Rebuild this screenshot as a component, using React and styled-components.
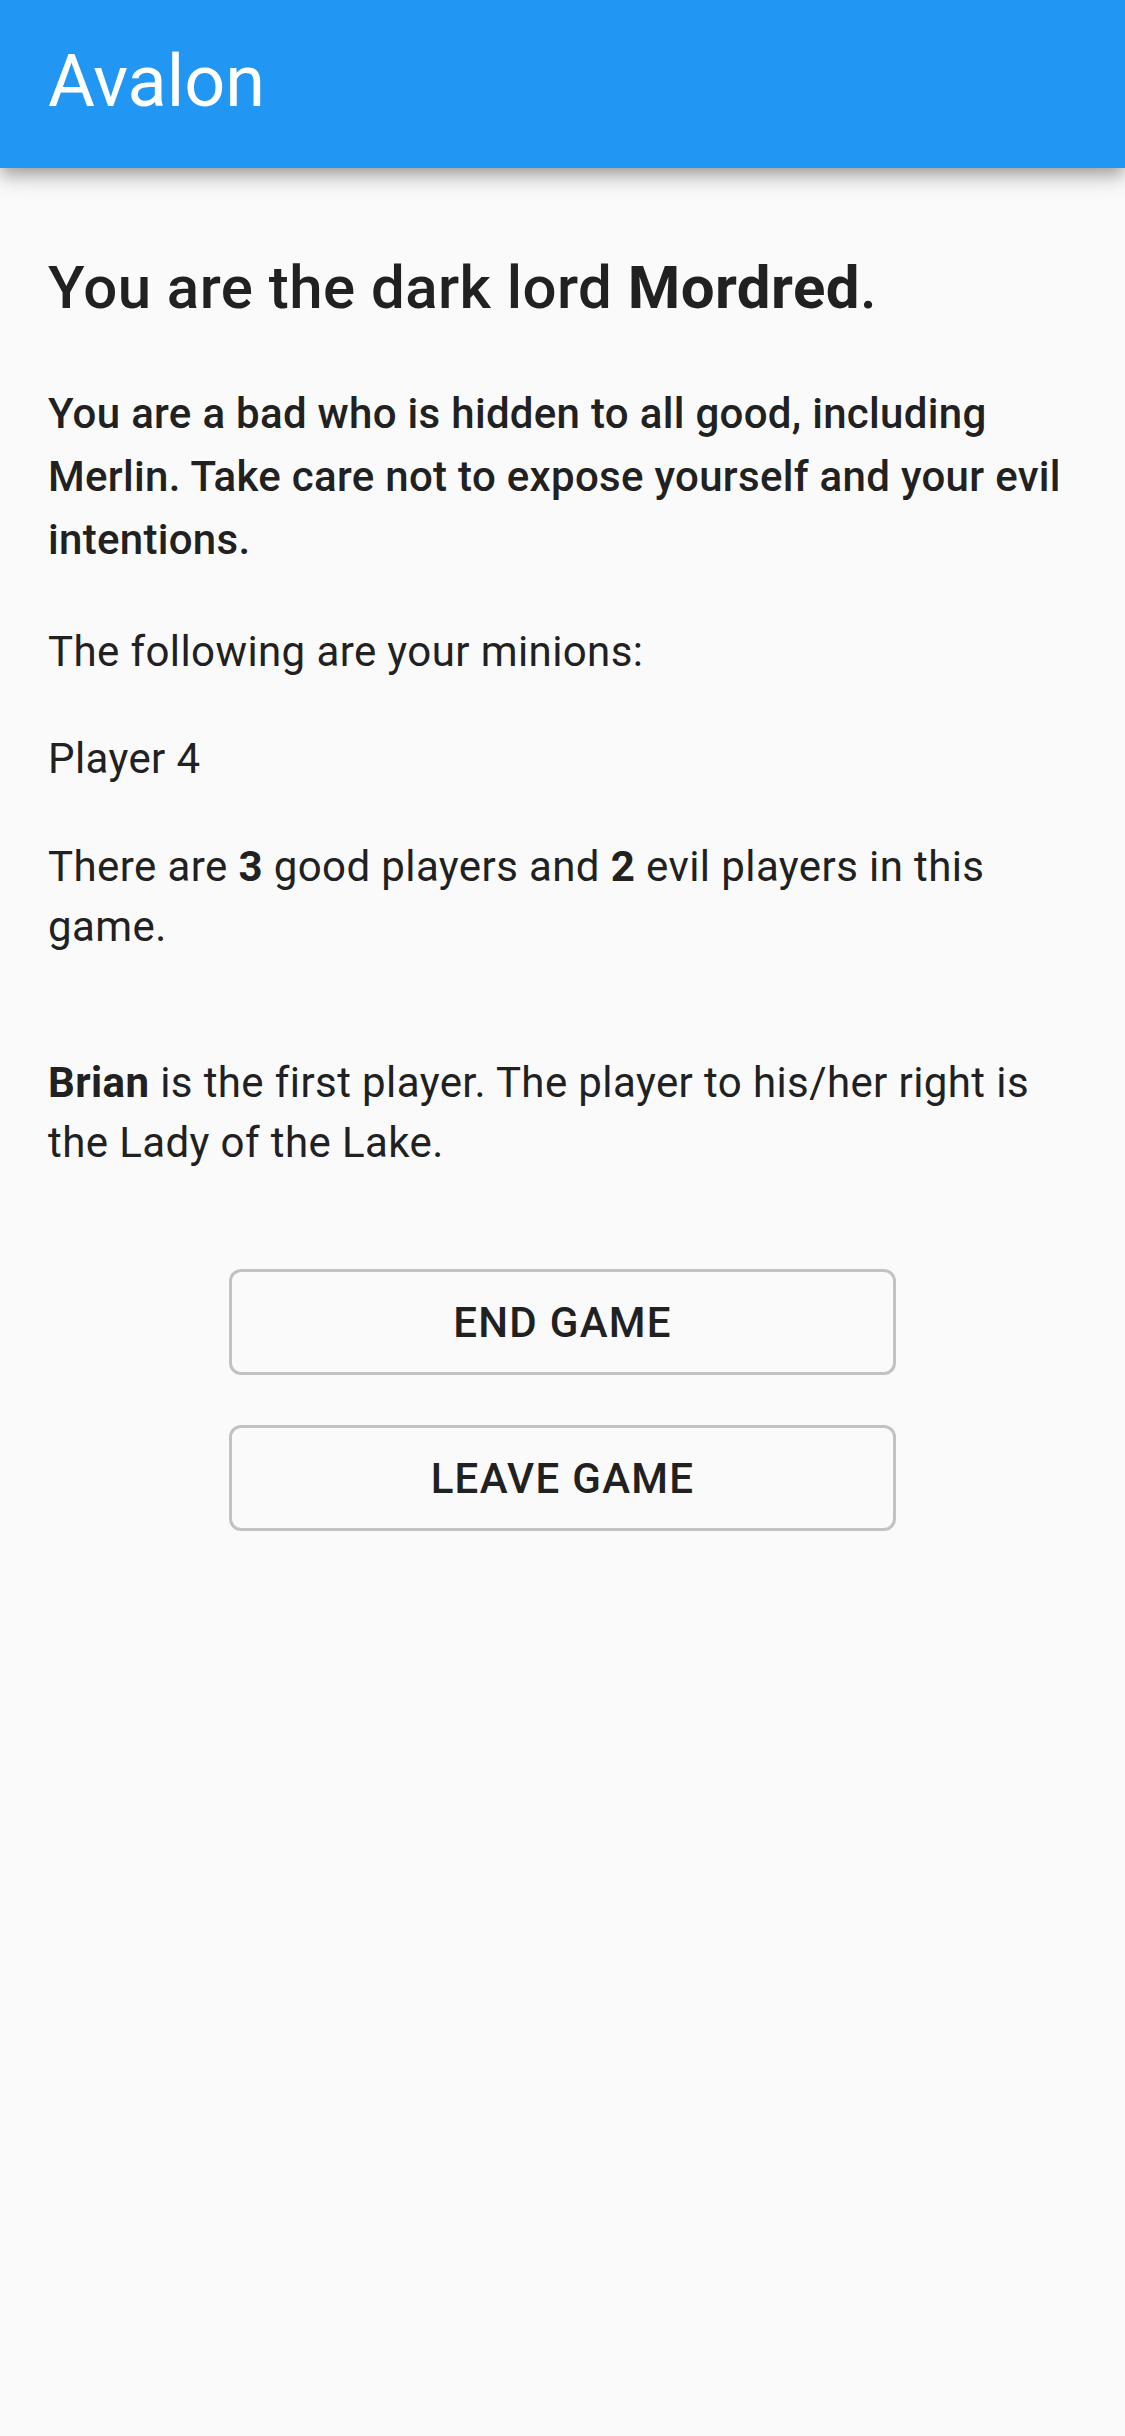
import styled, { createGlobalStyle } from "styled-components";

const GlobalStyle = createGlobalStyle`
  html, body {
    margin: 0;
    padding: 0;
    background: #fafafa;
  }
  body {
    font-family: Roboto, "Noto Sans", sans-serif;
    color: #212121;
  }
`;

const Page = styled.div`
  min-height: 2436px;
  background: #fafafa;
  display: flex;
  flex-direction: column;
`;

const AppBar = styled.header`
  height: 168px;
  background: #2196f3;
  display: flex;
  align-items: center;
  padding: 0 48px;
  box-shadow: 0 6px 12px -3px rgba(0, 0, 0, 0.2),
    0 12px 15px 0 rgba(0, 0, 0, 0.14), 0 3px 30px 0 rgba(0, 0, 0, 0.12);
  position: relative;
  z-index: 1;
`;

const AppTitle = styled.h1`
  margin: 0;
  font-size: 72px;
  font-weight: 400;
  color: #fff;
  line-height: 1;
  padding-bottom: 4px;
`;

const Content = styled.main`
  padding: 82px 48px 0;
  display: flex;
  flex-direction: column;
`;

const Heading = styled.h2`
  margin: 0 0 57px;
  font-size: 60px;
  line-height: 75px;
  letter-spacing: 0.45px;
  font-weight: 500;
`;

const Strong = styled.b`
  font-weight: 700;
`;

const Lead = styled.p`
  margin: 0 0 51px;
  font-size: 42px;
  line-height: 63px;
  letter-spacing: 0.3px;
  font-weight: 500;
`;

const Text = styled.p`
  margin: 0 0 ${({ $gap }) => $gap ?? 48}px;
  font-size: 42px;
  line-height: 60px;
  letter-spacing: 0.4px;
  font-weight: 400;
`;

const Actions = styled.div`
  display: flex;
  flex-direction: column;
  align-items: center;
  gap: 50px;
`;

const OutlineButton = styled.button`
  width: 667px;
  height: 106px;
  border: 3px solid #c2c2c2;
  border-radius: 12px;
  background: transparent;
  color: #212121;
  font-family: Roboto, sans-serif;
  font-size: 42px;
  font-weight: 500;
  letter-spacing: 1.3px;
  text-transform: uppercase;
  cursor: pointer;
`;

export default function App() {
  return (
    <>
      <GlobalStyle />
      <Page>
        <AppBar>
          <AppTitle>Avalon</AppTitle>
        </AppBar>
        <Content>
          <Heading>
            You are the dark lord <Strong>Mordred</Strong>.
          </Heading>
          <Lead>
            You are a bad who is hidden to all good, including Merlin. Take
            care not to expose yourself and your evil intentions.
          </Lead>
          <Text $gap={47}>The following are your minions:</Text>
          <Text>Player 4</Text>
          <Text $gap={96}>
            There are <Strong>3</Strong> good players and <Strong>2</Strong>{" "}
            evil players in this game.
          </Text>
          <Text $gap={96}>
            <Strong>Brian</Strong> is the first player. The player to his/her
            right is the Lady of the Lake.
          </Text>
          <Actions>
            <OutlineButton>End Game</OutlineButton>
            <OutlineButton>Leave Game</OutlineButton>
          </Actions>
        </Content>
      </Page>
    </>
  );
}
